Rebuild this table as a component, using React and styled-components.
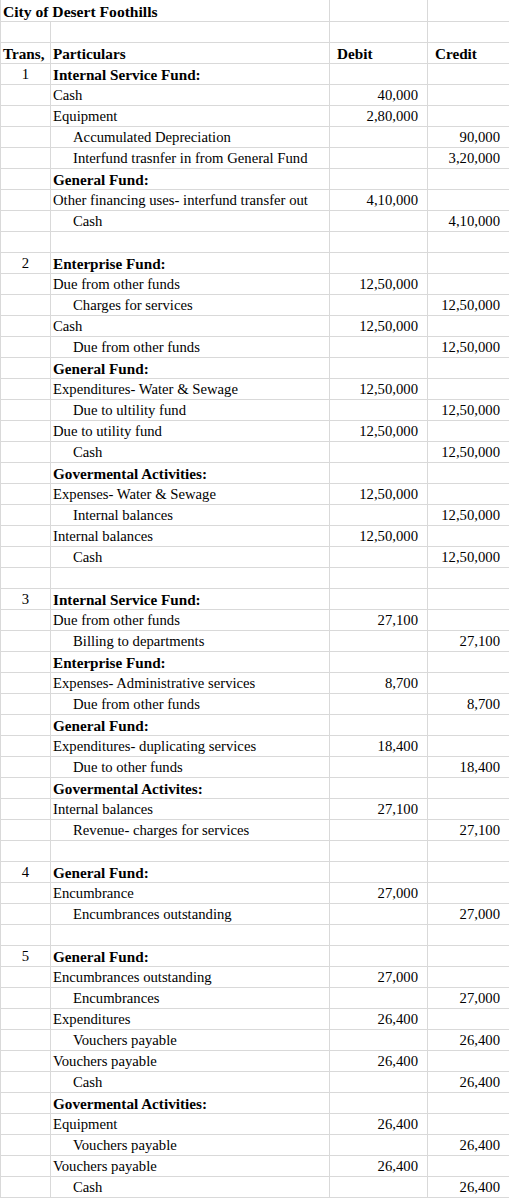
import React from "react";
import styled, { createGlobalStyle } from "styled-components";

const GlobalStyle = createGlobalStyle`
  body {
    margin: 0;
    background: #ffffff;
  }
`;

const Sheet = styled.div`
  width: 509px;
  box-sizing: border-box;
  border-left: 1px solid #d9d9d9;
  font-family: "Liberation Serif", "Times New Roman", serif;
  font-size: 14.7px;
  color: #000;
`;

const Row = styled.div`
  display: grid;
  grid-template-columns: 50px 279px 98px 1fr;
  height: ${props => (props.$tall ? 22 : 21)}px;
`;

const Cell = styled.div`
  box-sizing: border-box;
  display: flex;
  align-items: flex-end;
  justify-content: ${props => props.$align || "flex-start"};
  padding: 0 ${props => (props.$align === "flex-end" ? 9 : 2)}px 1px
    ${props => props.$indent || 2}px;
  border-bottom: 1px solid #d9d9d9;
  border-right: ${props => (props.$last ? "none" : "1px solid #d9d9d9")};
  line-height: 17px;
  white-space: nowrap;
  font-weight: ${props => (props.$bold ? 700 : 400)};
  font-size: ${props => (props.$bold ? "15.2px" : "inherit")};
`;

const TitleCell = styled(Cell)`
  grid-column: 1 / 3;
  font-size: 15.6px;
`;

const rows = [
  { blank: true },
  { header: true },
  { no: 1, head: "Internal Service Fund:" },
  { text: "Cash", debit: "40,000" },
  { text: "Equipment", debit: "2,80,000" },
  { text: "Accumulated Depreciation", credit: "90,000" },
  { text: "Interfund trasnfer in from General Fund", credit: "3,20,000" },
  { head: "General Fund:" },
  { text: "Other financing uses- interfund transfer out", debit: "4,10,000" },
  { text: "Cash", credit: "4,10,000" },
  { blank: true },
  { no: 2, head: "Enterprise Fund:" },
  { text: "Due from other funds", debit: "12,50,000" },
  { text: "Charges for services", credit: "12,50,000" },
  { text: "Cash", debit: "12,50,000" },
  { text: "Due from other funds", credit: "12,50,000" },
  { head: "General Fund:" },
  { text: "Expenditures- Water & Sewage", debit: "12,50,000" },
  { text: "Due to ultility fund", credit: "12,50,000" },
  { text: "Due to utility fund", debit: "12,50,000" },
  { text: "Cash", credit: "12,50,000" },
  { head: "Govermental Activities:" },
  { text: "Expenses- Water & Sewage", debit: "12,50,000" },
  { text: "Internal balances", credit: "12,50,000" },
  { text: "Internal balances", debit: "12,50,000" },
  { text: "Cash", credit: "12,50,000" },
  { blank: true },
  { no: 3, head: "Internal Service Fund:" },
  { text: "Due from other funds", debit: "27,100" },
  { text: "Billing to departments", credit: "27,100" },
  { head: "Enterprise Fund:" },
  { text: "Expenses- Administrative services", debit: "8,700" },
  { text: "Due from other funds", credit: "8,700" },
  { head: "General Fund:" },
  { text: "Expenditures- duplicating services", debit: "18,400" },
  { text: "Due to other funds", credit: "18,400" },
  { head: "Govermental Activites:" },
  { text: "Internal balances", debit: "27,100" },
  { text: "Revenue- charges for services", credit: "27,100" },
  { blank: true },
  { no: 4, head: "General Fund:" },
  { text: "Encumbrance", debit: "27,000" },
  { text: "Encumbrances outstanding", credit: "27,000" },
  { blank: true },
  { no: 5, head: "General Fund:" },
  { text: "Encumbrances outstanding", debit: "27,000" },
  { text: "Encumbrances", credit: "27,000" },
  { text: "Expenditures", debit: "26,400" },
  { text: "Vouchers payable", credit: "26,400" },
  { text: "Vouchers payable", debit: "26,400" },
  { text: "Cash", credit: "26,400" },
  { head: "Govermental Activities:" },
  { text: "Equipment", debit: "26,400" },
  { text: "Vouchers payable", credit: "26,400" },
  { text: "Vouchers payable", debit: "26,400" },
  { text: "Cash", credit: "26,400" }
];

const SheetRow = ({ row }) => {
  if (row.header) {
    return (
      <Row>
        <Cell $bold>Trans,</Cell>
        <Cell $bold>Particulars</Cell>
        <Cell $bold $indent={7}>Debit</Cell>
        <Cell $bold $indent={7} $last>Credit</Cell>
      </Row>
    );
  }
  return (
    <Row>
      <Cell $align="center">{row.no}</Cell>
      <Cell $bold={!!row.head} $indent={row.credit ? 22 : 2}>
        {row.head || row.text}
      </Cell>
      <Cell $align="flex-end">{row.debit}</Cell>
      <Cell $align="flex-end" $last>{row.credit}</Cell>
    </Row>
  );
};

const App = () => {
  return (
    <>
      <GlobalStyle />
      <Sheet>
        <Row $tall>
          <TitleCell $bold>City of Desert Foothills</TitleCell>
          <Cell />
          <Cell $last />
        </Row>
        {rows.map((row, i) => (
          <SheetRow key={i} row={row} />
        ))}
      </Sheet>
    </>
  );
};

export default App;
